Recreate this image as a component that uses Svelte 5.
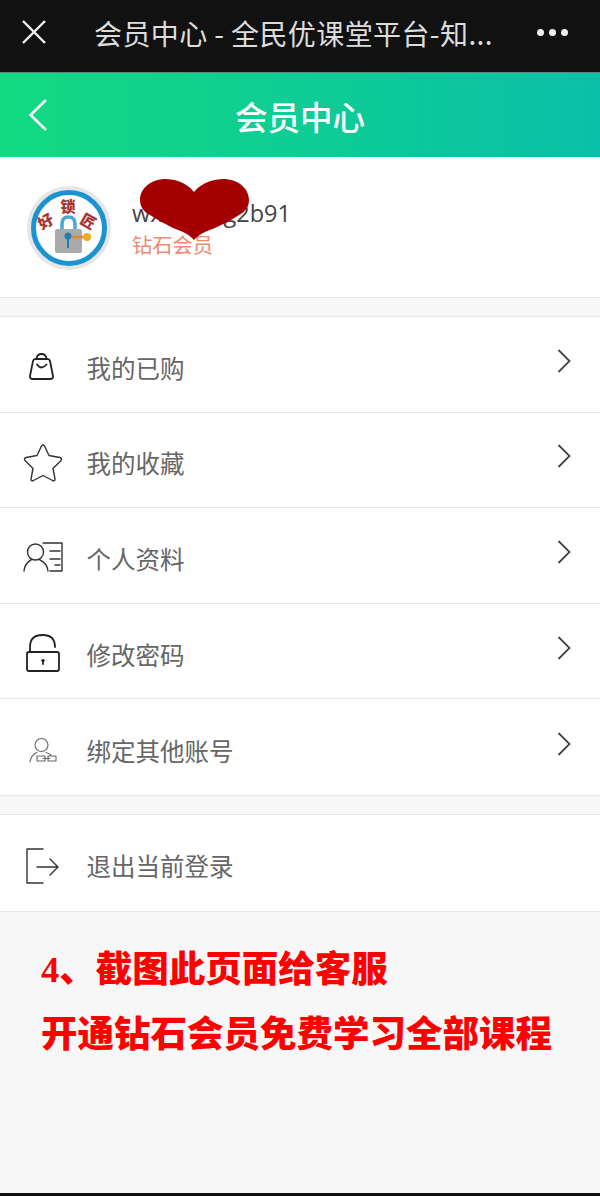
<script>
    const menu = [
        {
            label: "我的已购",
            d: "M12.5 12 H24.5 Q26.5 12 27 14 L30 29 Q30.5 32 27 32 H10 Q6.5 32 7 29 L10 14 Q10.5 12 12.5 12 Z M13.5 12 Q14 7 18.5 7 Q23 7 23.5 12 M14 17.5 Q18.5 23.5 23.5 17.5",
        },
        {
            label: "我的收藏",
            d: "M18.5 3 Q20 1 21.5 3 L26 12.5 L37 14.5 Q39.5 15.5 38 17.5 L30 25.5 L32 36 Q32 38.5 29.5 37.5 L20 32.5 L10.5 37.5 Q8 38.5 8 36 L10 25.5 L2 17.5 Q.5 15.5 3 14.5 L14 12.5 Z",
            weight: "mid",
        },
        {
            label: "个人资料",
            d: "M12.5 6 A8 8 0 1 1 12.5 22 A8 8 0 1 1 12.5 6 Z M1 33 Q2 25 8 22 M17 22 Q24 25 25 33 M20 5 H39 V33 H27 M27 13 H37 M27 21 H37 M32 27 H37",
            weight: "mid",
        },
        {
            label: "修改密码",
            d: "M6 18 H34 Q36 18 36 20 V35 Q36 37 34 37 H6 Q4 37 4 35 V20 Q4 18 6 18 Z M7 18 V13 Q7 1 19.5 1 Q32 1 32 13 M20 26 V30 M19 26.5 H21",
        },
        {
            label: "绑定其他账号",
            weight: "thin",
            d: "M18.5 8.5 A6.5 6.5 0 1 1 18.5 21.5 A6.5 6.5 0 1 1 18.5 8.5 Z M7 32 Q8 25 14 22.5 M23 22.5 Q26 23.5 28 25 M14 26 H22 V31 H14 Z M25 26 H33 V31 H25 Z M20 28.5 H27",
        },
    ];
    const logout = {
        label: "退出当前登录",
        d: "M20 3 H4 V37 H20 M14 21 H35 M27 13 L35 21 L27 29",
        weight: "mid",
    };
</script>

{#snippet row(item, arrow)}
    <div class="row">
        <svg class="icon {item.weight ?? ''}" viewBox="0 0 40 40">
            <path d={item.d} />
        </svg>
        <span class="label">{item.label}</span>
        {#if arrow}
            <svg class="arrow" viewBox="0 0 14 24">
                <path d="M1.5 1 L12.5 12 L1.5 23" />
            </svg>
        {/if}
    </div>
{/snippet}

<div class="page">
    <header class="wx-bar">
        <svg class="close" viewBox="0 0 24 24">
            <path d="M1 1 L23 23 M23 1 L1 23" />
        </svg>
        <div class="wx-title">会员中心 - 全民优课堂平台-知...</div>
        <div class="dots"><i></i><i></i><i></i></div>
    </header>

    <div class="nav">
        <svg class="back" viewBox="0 0 18 32">
            <path d="M17 1 L1.5 16 L17 31" />
        </svg>
        <h1>会员中心</h1>
    </div>

    <section class="profile">
        <svg class="avatar" viewBox="0 0 84 84">
            <circle cx="42" cy="42" r="42" fill="#e6e6e6" />
            <circle cx="42" cy="42" r="37.5" fill="#fff" />
            <circle cx="42" cy="42" r="35.5" fill="none" stroke="#1b93d2" stroke-width="5" />
            <path d="M35 44 V38 Q35 31 41.5 31 Q48 31 48 38 V44" fill="none" stroke="#4aa8d8" stroke-width="3.5" />
            <rect x="28" y="43" width="27" height="24" rx="2" fill="#aaaaaa" />
            <circle cx="41" cy="50" r="3.5" fill="#1b7fb5" />
            <path d="M41 50 V62" stroke="#1b7fb5" stroke-width="2" />
            <path d="M44 51 H58" stroke="#e0852c" stroke-width="2.5" />
            <circle cx="60" cy="51" r="4" fill="#eeaa22" />
            <text x="41" y="26" class="seal">锁</text>
            <text x="19" y="41" class="seal" transform="rotate(-30 19 36)">好</text>
            <text x="61" y="41" class="seal" transform="rotate(30 61 36)">匠</text>
        </svg>
        <div class="who">
            <div class="name">wxa5f7eg2b91</div>
            <div class="level">钻石会员</div>
        </div>
        <svg class="heart" viewBox="0 0 109 61">
            <path d="M54 13 C46 3 34 0 26 0 C10 0 0 10 0 21 C0 28 4 33 10 36 C17 41 26 45 33 49 C42 52 50 56 54 61 C58 56 66 52 75 49 C83 45 92 41 99 36 C105 33 109 28 109 21 C109 10 99 0 83 0 C75 0 62 3 54 13 Z" />
        </svg>
    </section>

    <div class="gap"></div>

    <section class="list">
        {#each menu as item}
            {@render row(item, true)}
        {/each}
    </section>

    <div class="gap"></div>

    <section class="list">
        {@render row(logout, false)}
    </section>

    <section class="notice">
        <p>4、截图此页面给客服</p>
        <p>开通钻石会员免费学习全部课程</p>
    </section>

    <div class="end"></div>
</div>

<style>
    :global(body) {
        margin: 0;
        background: #f7f7f7;
    }

    .page {
        width: 600px;
        height: 1196px;
        display: flex;
        flex-direction: column;
        overflow: hidden;
        font-family: "Noto Sans CJK SC", "Noto Sans", sans-serif;
    }

    .wx-bar {
        height: 73px;
        flex: none;
        box-sizing: border-box;
        background: #111111;
        display: flex;
        align-items: center;
        padding: 0 32px 0 22px;
        border-bottom: 1px solid #4f8f7a;
    }

    .close {
        width: 24px;
        height: 24px;
        margin-bottom: 9px;
    }

    .close path {
        fill: none;
        stroke: #f4f4f4;
        stroke-width: 2.4;
    }

    .wx-title {
        flex: 1;
        margin: 0 0 6px 48px;
        color: #dddddd;
        font-size: 28px;
        letter-spacing: 0.4px;
        line-height: 66px;
        white-space: nowrap;
    }

    .dots {
        display: flex;
        gap: 5px;
        margin-bottom: 7px;
    }

    .dots i {
        width: 7px;
        height: 7px;
        border-radius: 50%;
        background: #f0f0f0;
    }

    .nav {
        height: 84px;
        flex: none;
        position: relative;
        background: linear-gradient(90deg, #13d981 0%, #0ac0a8 100%);
        display: flex;
        align-items: center;
        justify-content: center;
    }

    .back {
        position: absolute;
        left: 29px;
        top: 26px;
        width: 18px;
        height: 32px;
    }

    .back path {
        fill: none;
        stroke: #fff;
        stroke-width: 2.6;
    }

    .nav h1 {
        margin: 0;
        color: #fff;
        font-size: 32.5px;
        font-weight: 500;
    }

    .profile {
        height: 140px;
        flex: none;
        position: relative;
        background: #fff;
        display: flex;
        align-items: center;
        padding: 1px 0 0 27px;
        box-sizing: border-box;
    }

    .avatar {
        width: 84px;
        height: 84px;
    }

    .seal {
        font-family: "Noto Sans CJK SC", sans-serif;
        font-size: 15px;
        font-weight: 900;
        fill: #a8322c;
        text-anchor: middle;
    }

    .who {
        margin-left: 21px;
        margin-top: 2px;
    }

    .name {
        color: #444;
        font-family: "Open Sans", sans-serif;
        font-size: 23.5px;
        line-height: 30px;
    }

    .level {
        color: #ee8a70;
        font-size: 20.3px;
        line-height: 32px;
    }

    .heart {
        position: absolute;
        left: 140px;
        top: 22px;
        width: 109px;
        height: 61px;
    }

    .heart path {
        fill: #a50000;
    }

    .gap {
        height: 20px;
        flex: none;
        box-sizing: border-box;
        background: #f7f7f7;
        border-top: 1px solid #e8e8e8;
        border-bottom: 1px solid #e8e8e8;
    }

    .list {
        flex: none;
        background: #fff;
    }

    .row {
        height: 95.6px;
        box-sizing: border-box;
        display: flex;
        align-items: center;
        padding: 6px 29px 0 23px;
        border-bottom: 1.5px solid #e8e8e8;
    }

    .row:last-child {
        border-bottom: none;
    }

    .icon {
        width: 40px;
        height: 40px;
        flex: none;
    }

    .icon path {
        fill: none;
        stroke: #222;
        stroke-width: 1.8;
        stroke-linejoin: round;
        stroke-linecap: round;
    }

    .icon.mid path {
        stroke: #333;
        stroke-width: 1.4;
    }

    .icon.thin path {
        stroke: #666;
        stroke-width: 1.1;
    }

    .label {
        flex: 1;
        margin-left: 23.5px;
        color: #666;
        font-size: 24.5px;
    }

    .arrow {
        width: 14px;
        height: 24px;
        margin-bottom: 13px;
    }

    .arrow path {
        fill: none;
        stroke: #444;
        stroke-width: 1.8;
    }

    .notice {
        flex: 1;
        background: #f7f7f7;
        border-top: 1.5px solid #e8e8e8;
        padding: 25px 0 0 41px;
    }

    .notice p {
        margin: 0;
        color: #ff0000;
        font-family: "Liberation Serif", "Noto Sans CJK SC", serif;
        font-size: 36.5px;
        font-weight: 900;
        line-height: 65px;
        white-space: nowrap;
    }

    .end {
        height: 3px;
        flex: none;
        background: #111;
    }
</style>
